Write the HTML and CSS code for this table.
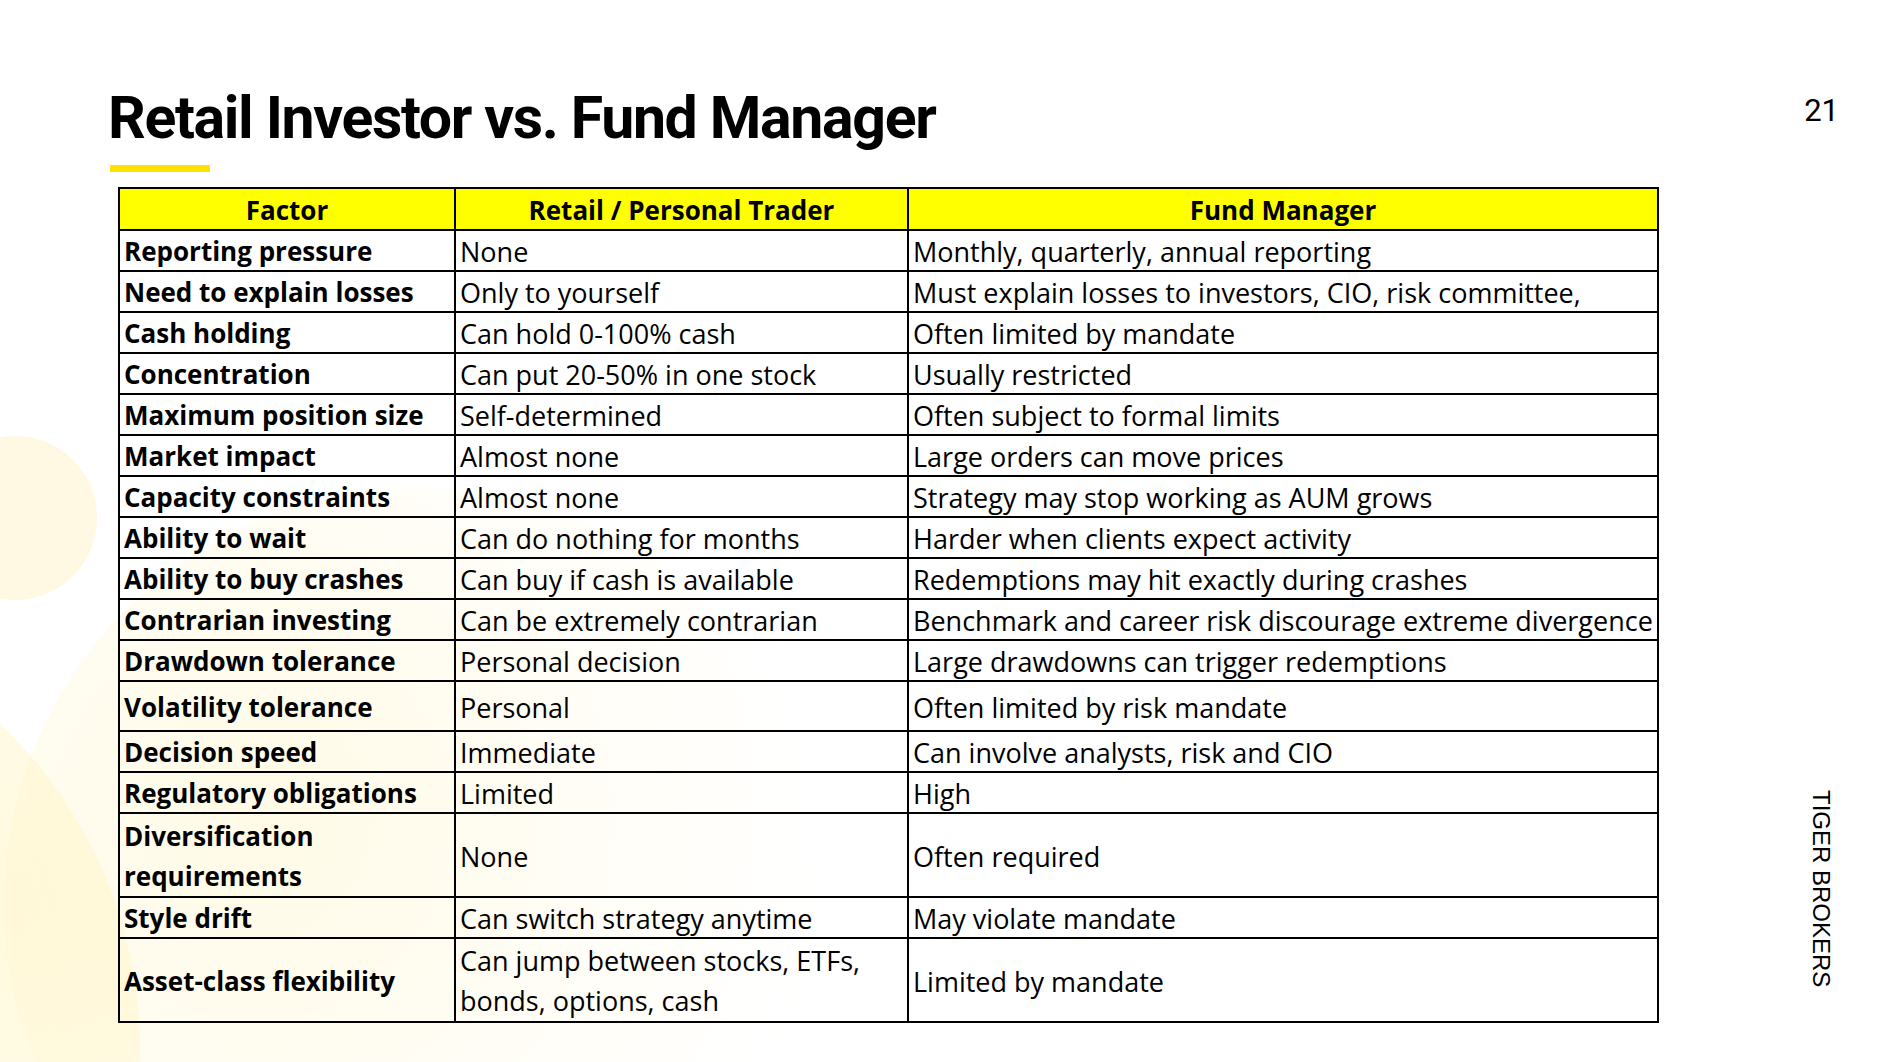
FILE: index.html
```html
<!DOCTYPE html>
<html lang="en">
<head>
<meta charset="utf-8">
<title>Retail Investor vs. Fund Manager</title>
<link rel="stylesheet" href="styles.css">
</head>
<body>
<div class="slide">
  <div class="bg" aria-hidden="true">
    <span class="blob blob-small"></span>
    <span class="blob blob-large"></span>
    <span class="blob blob-wedge"></span>
  </div>

  <main class="content">
    <h1 class="title">Retail Investor vs. Fund Manager</h1>
    <div class="accent"></div>

    <table class="cmp">
      <colgroup>
        <col class="c-factor">
        <col class="c-retail">
        <col class="c-fund">
      </colgroup>
      <thead>
        <tr class="head">
          <th>Factor</th>
          <th>Retail / Personal Trader</th>
          <th>Fund Manager</th>
        </tr>
      </thead>
      <tbody>
        <tr><th>Reporting pressure</th><td>None</td><td>Monthly, quarterly, annual reporting</td></tr>
        <tr><th>Need to explain losses</th><td>Only to yourself</td><td>Must explain losses to investors, CIO, risk committee,</td></tr>
        <tr><th>Cash holding</th><td>Can hold 0-100% cash</td><td>Often limited by mandate</td></tr>
        <tr><th>Concentration</th><td>Can put 20-50% in one stock</td><td>Usually restricted</td></tr>
        <tr><th>Maximum position size</th><td>Self-determined</td><td>Often subject to formal limits</td></tr>
        <tr><th>Market impact</th><td>Almost none</td><td>Large orders can move prices</td></tr>
        <tr><th>Capacity constraints</th><td>Almost none</td><td>Strategy may stop working as AUM grows</td></tr>
        <tr><th>Ability to wait</th><td>Can do nothing for months</td><td>Harder when clients expect activity</td></tr>
        <tr><th>Ability to buy crashes</th><td>Can buy if cash is available</td><td>Redemptions may hit exactly during crashes</td></tr>
        <tr><th>Contrarian investing</th><td>Can be extremely contrarian</td><td>Benchmark and career risk discourage extreme divergence</td></tr>
        <tr><th>Drawdown tolerance</th><td>Personal decision</td><td>Large drawdowns can trigger redemptions</td></tr>
        <tr class="row-mid"><th>Volatility tolerance</th><td>Personal</td><td>Often limited by risk mandate</td></tr>
        <tr><th>Decision speed</th><td>Immediate</td><td>Can involve analysts, risk and CIO</td></tr>
        <tr><th>Regulatory obligations</th><td>Limited</td><td>High</td></tr>
        <tr class="row-double"><th class="multi">Diversification<br>requirements</th><td>None</td><td>Often required</td></tr>
        <tr><th>Style drift</th><td>Can switch strategy anytime</td><td>May violate mandate</td></tr>
        <tr class="row-double row-last"><th>Asset-class flexibility</th><td class="multi">Can jump between stocks, ETFs,<br>bonds, options, cash</td><td>Limited by mandate</td></tr>
      </tbody>
    </table>
  </main>

  <aside class="side">
    <div class="page-num">21</div>
    <div class="brand">TIGER BROKERS</div>
  </aside>
</div>
</body>
</html>
```

FILE: styles.css
```css
* { box-sizing: border-box; }

html, body {
  margin: 0;
  padding: 0;
  background: #ffffff;
}

.slide {
  position: relative;
  width: 1887px;
  height: 1062px;
  overflow: hidden;
  display: flex;
  background: #ffffff;
  color: #000000;
}

/* decorative background shapes (under content) */
.bg {
  position: absolute;
  inset: 0;
  z-index: 0;
  pointer-events: none;
}
.blob {
  position: absolute;
  display: block;
  border-radius: 50%;
}
.blob-small {
  left: -67px;
  top: 436px;
  width: 164px;
  height: 164px;
  background: #fff8e3;
}
.blob-large {
  left: 4px;
  top: 488px;
  width: 830px;
  height: 830px;
  background: radial-gradient(circle at 30% 40%, rgba(255, 246, 205, 0.5) 0%, rgba(255, 250, 228, 0.32) 45%, rgba(255, 255, 255, 0) 75%);
}
.blob-wedge {
  left: -760px;
  top: 600px;
  width: 900px;
  height: 900px;
  background: radial-gradient(circle at 80% 35%, rgba(255, 242, 180, 0.45) 0%, rgba(255, 246, 205, 0.38) 40%, rgba(255, 250, 228, 0.25) 70%);
}

.content {
  position: relative;
  z-index: 1;
  flex: 1;
  padding: 83px 0 0 108px;
}

.title {
  margin: 0;
  font-family: Roboto, "Liberation Sans", sans-serif;
  font-weight: 700;
  font-size: 59px;
  line-height: 70px;
  letter-spacing: -1.35px;
  color: #000;
  white-space: nowrap;
}

.accent {
  width: 100px;
  height: 7px;
  margin-top: 12px;
  margin-left: 2px;
  background: #ffe100;
  border-radius: 1px;
}

.cmp {
  margin-top: 15px;
  margin-left: 10px;
  width: 1539px;
  border-collapse: collapse;
  table-layout: fixed;
  font-family: "Open Sans", "Noto Sans", sans-serif;
  color: #000;
}
.c-factor { width: 336px; }
.c-retail { width: 453px; }
.c-fund { width: 750px; }

.cmp th,
.cmp td {
  border: 2px solid #000;
  padding: 2px 4px 0;
  line-height: 37px;
  height: 41px;
  text-align: left;
  vertical-align: middle;
  white-space: nowrap;
  background: transparent;
}
.cmp td {
  font-weight: 400;
  font-size: 27px;
}
.cmp th {
  font-weight: 700;
  font-size: 26px;
}

.cmp .head th {
  background: #ffff00;
  text-align: center;
  height: 42px;
  padding-top: 3px;
}

.cmp .row-mid th,
.cmp .row-mid td { height: 50px; }

.cmp .row-double th,
.cmp .row-double td { height: 84px; }
.cmp .row-last th,
.cmp .row-last td { height: 81px; }

.cmp .multi { line-height: 40px; }

.side {
  position: relative;
  z-index: 1;
  width: 180px;
  flex: none;
  display: flex;
  flex-direction: column;
  align-items: flex-end;
  padding: 93px 48px 0 0;
}

.page-num {
  font-family: Roboto, "Liberation Sans", sans-serif;
  font-size: 31px;
  line-height: 36px;
  color: #000;
}

.brand {
  margin-top: auto;
  margin-bottom: 75px;
  margin-right: 5px;
  writing-mode: vertical-rl;
  font-family: "Liberation Sans", Arial, sans-serif;
  font-size: 24px;
  line-height: 26px;
  color: #000;
  white-space: nowrap;
}
```
